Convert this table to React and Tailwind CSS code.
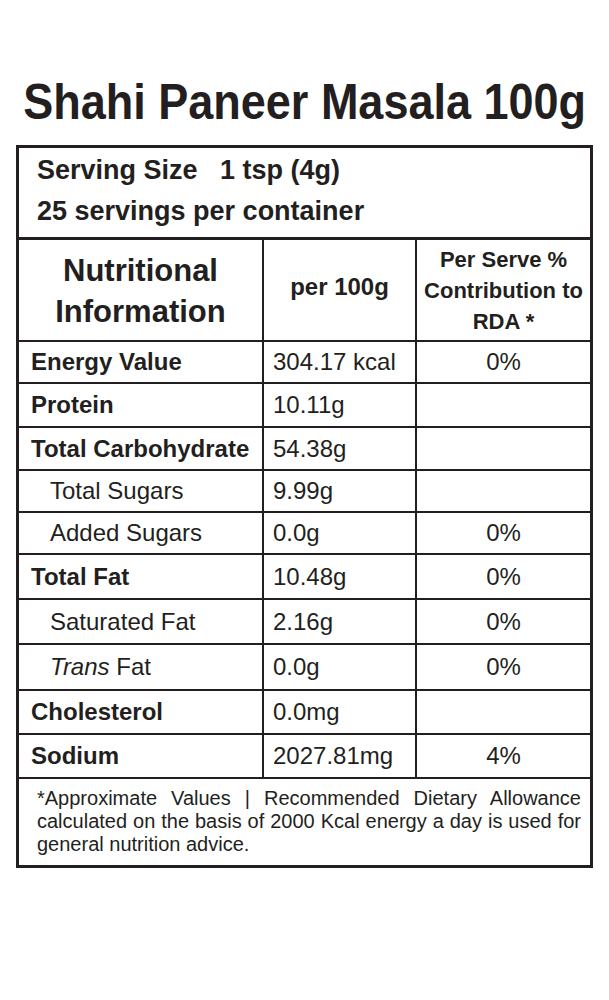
const rows = [
  { label: "Energy Value", bold: true, value: "304.17 kcal", rda: "0%", h: "h-[42px]" },
  { label: "Protein", bold: true, value: "10.11g", rda: "", h: "h-[44px]" },
  { label: "Total Carbohydrate", bold: true, value: "54.38g", rda: "", h: "h-[43px]" },
  { label: "Total Sugars", indent: true, value: "9.99g", rda: "", h: "h-[42px]" },
  { label: "Added Sugars", indent: true, value: "0.0g", rda: "0%", h: "h-[42px]" },
  { label: "Total Fat", bold: true, value: "10.48g", rda: "0%", h: "h-[45px]" },
  { label: "Saturated Fat", indent: true, value: "2.16g", rda: "0%", h: "h-[45px]" },
  { label: "Trans", italic: true, indent: true, value: "0.0g", rda: "0%", h: "h-[46px]" },
  { label: "Cholesterol", bold: true, value: "0.0mg", rda: "", h: "h-[44px]" },
  { label: "Sodium", bold: true, value: "2027.81mg", rda: "4%", h: "h-[44px]" },
];

const NutrientRow = ({ row }) => (
  <div className={`grid grid-cols-[245px_153px_1fr] border-b-2 border-[#231f20] ${row.h}`}>
    <div
      className={`flex items-center border-r-2 border-[#231f20] ${
        row.indent ? "pl-[31px]" : "pl-[12px]"
      } ${row.bold ? "font-bold" : ""}`}
    >
      {row.italic ? (
        <span>
          <i>Trans</i> Fat
        </span>
      ) : (
        row.label
      )}
    </div>
    <div className="flex items-center border-r-2 border-[#231f20] pl-[9px]">{row.value}</div>
    <div className="flex items-center justify-center">{row.rda}</div>
  </div>
);

const App = () => {
  return (
    <div
      className="w-[609px] h-[1000px] bg-white text-[#231f20] overflow-hidden"
      style={{ fontFamily: '"Liberation Sans", Arial, sans-serif' }}
    >
      <div className="pt-[77px] flex justify-center">
        <h1 className="shrink-0 whitespace-nowrap text-[50px] leading-none font-bold scale-x-90">
          Shahi Paneer Masala 100g
        </h1>
      </div>

      <div className="mx-[16px] mt-[18px] border-[3px] border-[#231f20]">
        {/* serving info */}
        <div className="h-[92px] border-b-[3px] border-[#231f20] pl-[18px] pt-[2px] font-bold text-[27px] leading-[41px]">
          <p className="whitespace-pre">Serving Size   1 tsp (4g)</p>
          <p>25 servings per container</p>
        </div>

        {/* header */}
        <div className="grid grid-cols-[245px_153px_1fr] h-[102px] border-b-2 border-[#231f20] font-bold text-center">
          <div className="flex items-center justify-center border-r-2 border-[#231f20] text-[31px] leading-[41px] pt-[2px]">
            <span>
              Nutritional
              <br />
              Information
            </span>
          </div>
          <div className="flex items-center justify-center border-r-2 border-[#231f20] text-[24px] pb-[6px]">
            per 100g
          </div>
          <div className="flex items-center justify-center text-[22px] leading-[31px]">
            <span>
              Per Serve %
              <br />
              Contribution to
              <br />
              RDA *
            </span>
          </div>
        </div>

        <div className="text-[24px]">
          {rows.map((row) => (
            <NutrientRow key={row.label} row={row} />
          ))}
        </div>

        {/* footnote */}
        <div className="h-[86px] pl-[18px] pr-[9px] pt-[8px] text-[20px] leading-[23px] text-justify">
          *Approximate Values | Recommended Dietary Allowance calculated on the basis of 2000 Kcal
          energy a day is used for general nutrition advice.
        </div>
      </div>
    </div>
  );
};

export default App;
